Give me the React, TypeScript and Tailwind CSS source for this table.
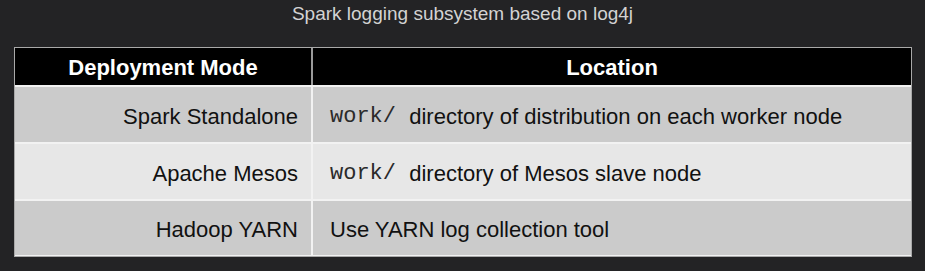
const rows = [
  { mode: "Spark Standalone", code: "work/ ", text: "directory of distribution on each worker node", bg: "bg-[#cbcbcb]" },
  { mode: "Apache Mesos", code: "work/ ", text: "directory of Mesos slave node", bg: "bg-[#e7e7e7]" },
  { mode: "Hadoop YARN", code: "", text: "Use YARN log collection tool", bg: "bg-[#cbcbcb]" },
];

export default function App() {
  return (
    <div className="w-[925px] h-[271px] bg-[#232325] font-['Liberation_Sans',Arial,sans-serif]">
      <div className="h-[47px] pt-[3px] text-center text-[19px] leading-[22px] text-[#d3d3d3]">
        Spark logging subsystem based on log4j
      </div>
      <div className="ml-[14px] w-[898px] border border-[#a9a9a9]">
        <div className="grid grid-cols-[298px_1fr] h-[39px] bg-black border-b-2 border-[#f2f2f2] text-white font-bold text-[22px]">
          <div className="flex items-center justify-center pt-[1px] border-r-2 border-[#9a9a9a]">Deployment Mode</div>
          <div className="flex items-center justify-center pt-[1px]">Location</div>
        </div>
        {rows.map((r, i) => (
          <div
            key={r.mode}
            className={`grid grid-cols-[298px_1fr] text-[22px] text-[#111] ${r.bg} ${
              i < rows.length - 1 ? "h-[57px] border-b-2 border-[#f2f2f2]" : "h-[55px] border-b border-[#f2f2f2]"
            }`}
          >
            <div className="flex items-center justify-end pt-[3px] pr-[13px] border-r-2 border-[#f2f2f2]">{r.mode}</div>
            <div className="flex items-center pt-[3px] pl-[17px] whitespace-pre">
              {r.code && (
                <span className="font-['Liberation_Mono','Courier_New',monospace] text-[#2a2a2a]">{r.code}</span>
              )}
              <span>{r.text}</span>
            </div>
          </div>
        ))}
      </div>
    </div>
  );
}
